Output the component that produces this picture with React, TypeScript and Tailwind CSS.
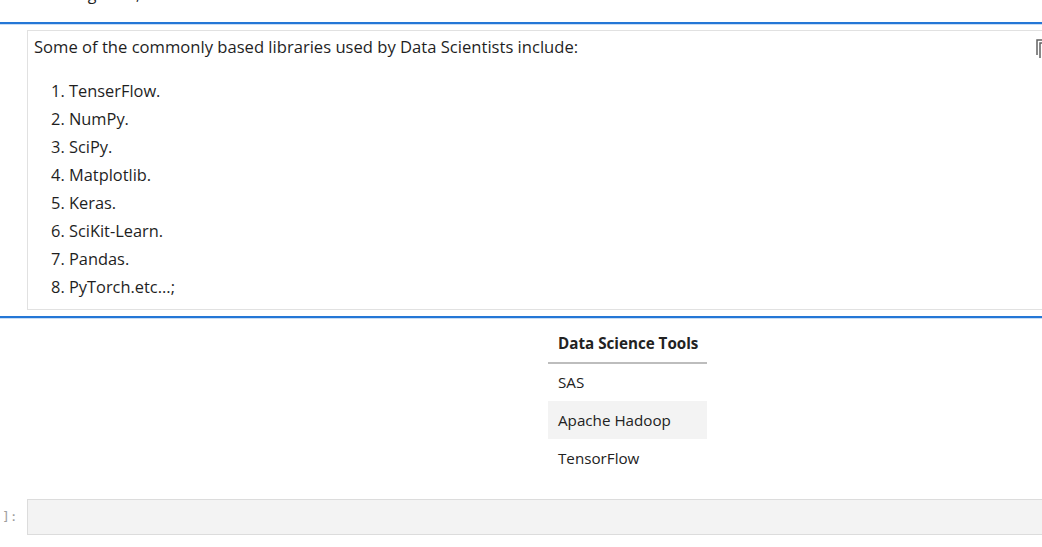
import React from "react";

const libs = [
  "TenserFlow.",
  "NumPy.",
  "SciPy.",
  "Matplotlib.",
  "Keras.",
  "SciKit-Learn.",
  "Pandas.",
  "PyTorch.etc...;",
];

const tools = ["SAS", "Apache Hadoop", "TensorFlow"];

function CopyIcon() {
  return (
    <svg width="10" height="20" viewBox="0 0 10 20" fill="none">
      <path d="M1 17V2h6" stroke="#616161" strokeWidth="1.5" />
      <path d="M4 20V5h6" stroke="#616161" strokeWidth="1.5" />
    </svg>
  );
}

export default function App() {
  return (
    <div
      className="w-[1042px] h-[547px] overflow-hidden bg-white text-[#1f1f1f]"
      style={{ fontFamily: '"Open Sans", "Noto Sans", sans-serif' }}
    >
      {/* previous cell, scrolled mostly out of view */}
      <div className="h-[22px] overflow-hidden relative">
        <div className="absolute left-[50px] top-[-16px] text-[16px] leading-[20px]">Orange etc.;</div>
      </div>
      <div className="h-[2px] bg-[#2477d6]" />
      <div className="h-[1px] bg-[#c9ddf5]" />

      {/* markdown cell */}
      <div className="pl-[27px] pt-[5px]">
        <div className="relative h-[280px] border border-[#e1e1e1] border-r-0 pl-[6px] pt-[4px]">
          <p className="text-[16.6px] leading-[24px]">
            Some of the commonly based libraries used by Data Scientists include:
          </p>
          <ol className="mt-[18px] pl-[17px] text-[16.4px]">
            {libs.map((l, i) => (
              <li key={i} className="h-[28px] leading-[28px]">
                {i + 1}. {l}
              </li>
            ))}
          </ol>
          <div className="absolute right-[-4px] top-[7px]">
            <CopyIcon />
          </div>
        </div>
      </div>

      <div className="mt-[6px] h-[2px] bg-[#2477d6]" />
      <div className="h-[1px] bg-[#c9ddf5]" />

      {/* output table */}
      <div className="pt-[6px] pl-[548px]">
        <table className="w-[159px] text-[15.2px] text-[#222]" style={{ borderCollapse: "collapse" }}>
          <thead>
            <tr className="border-b-2 border-[#bdbdbd]">
              <th className="h-[38px] text-left pl-[10px] font-bold">Data Science Tools</th>
            </tr>
          </thead>
          <tbody>
            {tools.map((t, i) => (
              <tr key={t} className={i === 1 ? "bg-[#f3f3f3]" : ""}>
                <td className="h-[38px] pl-[10px]">{t}</td>
              </tr>
            ))}
          </tbody>
        </table>
      </div>

      {/* empty code cell */}
      <div className="mt-[22px] flex items-center">
        <div
          className="w-[27px] pl-[2px] text-[13px] text-[#9e9e9e]"
          style={{ fontFamily: '"DejaVu Sans Mono", monospace' }}
        >
          ]:
        </div>
        <div className="flex-1 h-[36px] bg-[#f3f3f3] border border-[#dcdcdc] border-r-0" />
      </div>
    </div>
  );
}
